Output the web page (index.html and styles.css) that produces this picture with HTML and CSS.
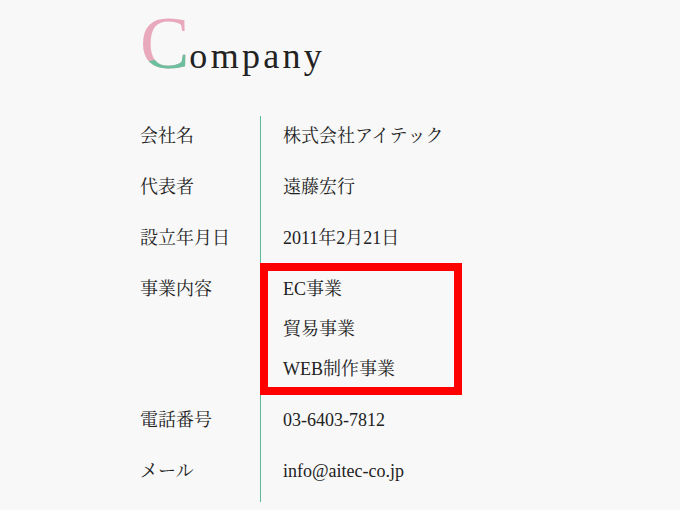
FILE: index.html
```html
<!DOCTYPE html>
<html lang="ja">
<head>
    <meta charset="utf-8">
    <title>Company</title>
    <link rel="stylesheet" href="styles.css">
</head>
<body>
    <div class="company">
        <h2 class="title"><span class="initial" data-letter="C">C</span>ompany</h2>

        <table class="profile">
            <tr>
                <th>会社名</th>
                <td>株式会社アイテック</td>
            </tr>
            <tr>
                <th>代表者</th>
                <td>遠藤宏行</td>
            </tr>
            <tr>
                <th>設立年月日</th>
                <td>2011年2月21日</td>
            </tr>
            <tr>
                <th>事業内容</th>
                <td>
                    <div class="marked">
                        EC事業<br>
                        貿易事業<br>
                        WEB制作事業
                    </div>
                </td>
            </tr>
            <tr>
                <th>電話番号</th>
                <td>03-6403-7812</td>
            </tr>
            <tr>
                <th>メール</th>
                <td>info@aitec-co.jp</td>
            </tr>
        </table>
    </div>
</body>
</html>
```

FILE: styles.css
```css
body {
    margin: 0;
    background-color: #f8f8f8;
    color: #222;
    font-family: "Liberation Serif", "Noto Serif CJK JP", "Noto Sans CJK JP", serif;
}
.company {
    width: 400px;
    margin: 0 auto;
    padding-top: 6px;
}
.title {
    margin: 0 0 30px;
    font-size: 36px;
    font-weight: normal;
    letter-spacing: 3.3px;
    line-height: 60px;
}
.initial {
    position: relative;
    display: inline-block;
    font-size: 74px;
    line-height: 1;
    letter-spacing: 0;
    color: #e9a9bd;
}
.initial::after {
    content: attr(data-letter);
    position: absolute;
    top: 0;
    left: 0;
    color: #6cbf9d;
    clip-path: polygon(0 77%, 100% 63%, 100% 100%, 0 100%);
}
.profile {
    width: 100%;
    border-collapse: collapse;
    font-size: 18px;
    line-height: 40px;
}
.profile th,
.profile td {
    padding: 0 0 11px;
    text-align: left;
    vertical-align: top;
    font-weight: normal;
}
.profile th {
    width: 120px;
}
.profile td {
    padding-left: 22px;
    border-left: 1px solid #5fb898;
}
.marked {
    position: relative;
    width: 179px;
}
.marked::after {
    content: "";
    position: absolute;
    top: -6px;
    bottom: -6px;
    left: -23px;
    right: 0;
    border: 8px solid #ff0000;
}
```
